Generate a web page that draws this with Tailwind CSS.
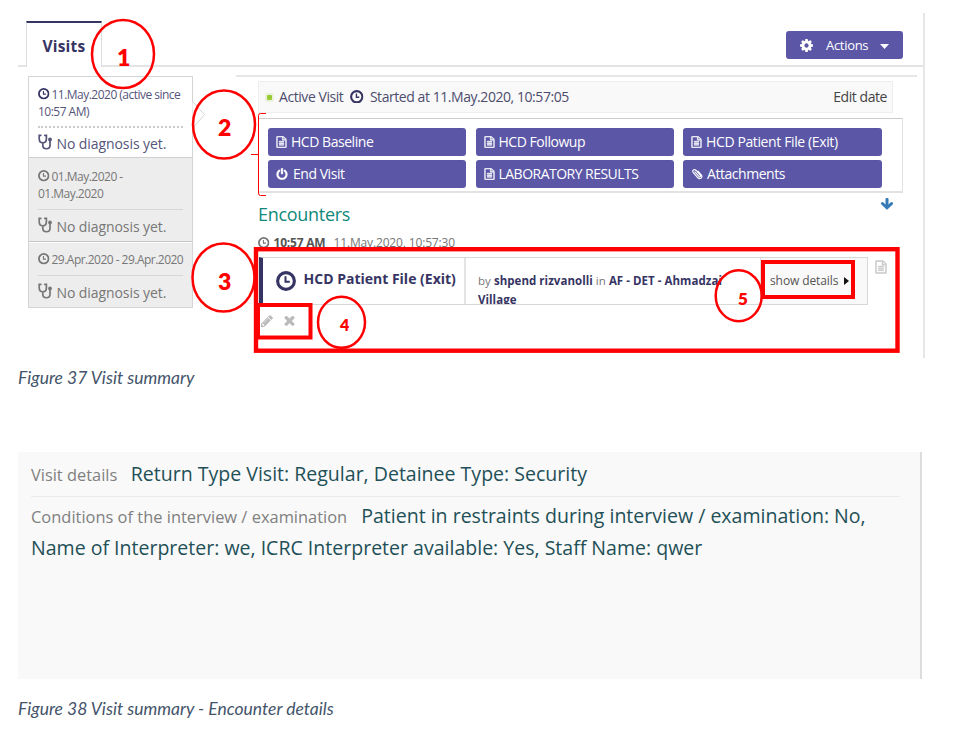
<!DOCTYPE html>
<html lang="en">
<head>
<meta charset="utf-8">
<title>Visit summary</title>
<script src="https://cdn.jsdelivr.net/npm/@tailwindcss/browser@4"></script>
</head>
<body class="bg-white">
<svg class="hidden">
  <symbol id="clock" viewBox="0 0 16 16"><circle cx="8" cy="8" r="6.700" fill="none" stroke="currentColor" stroke-width="2.500"/><path d="M7.600 4.200V8.600H11" fill="none" stroke="currentColor" stroke-width="1.600"/></symbol>
  <symbol id="file" viewBox="60 -40 1672 1872"><path fill="currentColor" stroke="currentColor" stroke-width="70" d="M1596 380q28 28 48 76t20 88v1152q0 40-28 68t-68 28h-1344q-40 0-68-28t-28-68v-1600q0-40 28-68t68-28h896q40 0 88 20t76 48zm-444-244v376h376q-10-29-22-41l-313-313q-12-12-41-22zm384 1528v-1024h-416q-40 0-68-28t-28-68v-416h-768v1536h1280zm-1024-864q0-14 9-23t23-9h704q14 0 23 9t9 23v64q0 14-9 23t-23 9h-704q-14 0-23-9t-9-23v-64zm736 224q14 0 23 9t9 23v64q0 14-9 23t-23 9h-704q-14 0-23-9t-9-23v-64q0-14 9-23t23-9h704zm0 256q14 0 23 9t9 23v64q0 14-9 23t-23 9h-704q-14 0-23-9t-9-23v-64q0-14 9-23t23-9h704z"/></symbol>
  <symbol id="power" viewBox="80 0 1632 1700"><path fill="currentColor" stroke="currentColor" stroke-width="50" d="M1664 896q0 156-61 298t-164 245-245 164-298 61-298-61-245-164-164-245-61-298q0-182 80.5-343t226.5-270q43-32 95.5-25t83.5 50q32 42 24.5 94.5t-49.5 84.5q-98 74-151.5 181t-53.5 228q0 104 40.5 198.5t109.5 163.5 163.5 109.5 198.5 40.5 198.5-40.5 163.5-109.5 109.5-163.5 40.5-198.5q0-121-53.5-228t-151.5-181q-42-32-49.5-84.5t24.5-94.5q31-43 84-50t95 25q146 109 226.5 270t80.5 343zm-640-768v640q0 52-38 90t-90 38-90-38-38-90v-640q0-52 38-90t90-38 90 38 38 90z"/></symbol>
  <symbol id="clip" viewBox="0 0 16 16"><path fill="none" stroke="currentColor" stroke-width="1.500" stroke-linecap="round" d="M5.200 5.200l5.300 6c1.400 1.400 3-.1 1.800-1.600L6.500 3C4.200.8.9 3.300 3.100 6.200l6 6.800c3.200 3.100 7.200-.6 4.500-3.900L9.300 4.200"/></symbol>
  <symbol id="pencil" viewBox="0 0 1792 1792"><path fill="currentColor" d="M491 1536l91-91-235-235-91 91v107h128v128h107zm523-928q0-22-22-22-10 0-17 7l-542 542q-7 7-7 17 0 22 22 22 10 0 17-7l542-542q7-7 7-17zm-54-192l416 416-832 832h-416v-416zm683 96q0 53-37 90l-166 166-416-416 166-165q36-38 90-38 53 0 91 38l235 234q37 39 37 91z"/></symbol>
  <symbol id="times" viewBox="256 384 1280 1280"><path fill="currentColor" d="M1490 1322q0 40-28 68l-136 136q-28 28-68 28t-68-28l-294-294-294 294q-28 28-68 28t-68-28l-136-136q-28-28-28-68t28-68l294-294-294-294q-28-28-28-68t28-68l136-136q28-28 68-28t68 28l294 294 294-294q28-28 68-28t68 28l136 136q28 28 28 68t-28 68l-294 294 294 294q28 28 28 68z"/></symbol>
  <symbol id="cog" viewBox="0 0 1792 1792"><path fill="currentColor" d="M1152 896q0-106-75-181t-181-75-181 75-75 181 75 181 181 75 181-75 75-181zm512-109v222q0 12-8 23t-20 13l-185 28q-19 54-39 91 35 50 107 138 10 12 10 25t-9 23q-27 37-99 108t-94 71q-12 0-26-9l-138-108q-44 23-91 38-16 136-29 186-7 28-36 28h-222q-14 0-24.5-8.5t-11.5-21.5l-28-184q-49-16-90-37l-141 107q-10 9-25 9-14 0-25-11-126-114-165-168-7-10-7-23 0-12 8-23 15-21 51-66.5t54-70.5q-27-50-41-99l-183-27q-13-2-21-12.5t-8-23.5v-222q0-12 8-23t19-13l186-28q14-46 39-92-40-57-107-138-10-12-10-24 0-10 9-23 26-36 98.5-107.5t94.5-71.5q13 0 26 10l138 107q44-23 91-38 16-136 29-186 7-28 36-28h222q14 0 24.5 8.5t11.5 21.5l28 184q49 16 90 37l142-107q9-9 24-9 13 0 25 10 129 119 165 170 7 8 7 22 0 12-8 23-15 21-51 66.5t-54 70.5q26 50 41 98l183 28q13 2 21 12.5t8 23.5z"/></symbol>
  <symbol id="down" viewBox="0 0 1792 1792"><path fill="currentColor" d="M1675 832q0 53-37 90l-651 652q-39 37-91 37-53 0-90-37l-651-652q-38-36-38-90 0-53 38-91l74-75q39-37 91-37 53 0 90 37l294 294v-704q0-52 38-90t90-38h128q52 0 90 38t38 90v704l294-294q37-37 90-37 52 0 91 37l75 75q37 39 37 91z"/></symbol>
  <symbol id="steth" viewBox="0 0 14 16"><path fill="none" stroke="currentColor" stroke-width="1.700" stroke-linecap="round" d="M2.800 1.400H1.200V4.500c0 5.800 7.200 5.800 7.200 0V1.400H6.800M4.800 9V11.500c0 4.300 7.200 4.300 7.200 0V7"/><circle cx="12" cy="5.500" r="1.900" fill="currentColor"/></symbol>
</svg>

<main class="relative w-[971px] h-[731px] overflow-hidden pl-[18px] pt-[13px] font-['Open_Sans',sans-serif] text-[#4d4d6e]">
  <!-- Visit dashboard -->
  <section class="w-[907px] h-[345px] border-r-2 border-[#e6e6e6]">
    <header class="flex items-end h-[54px]">
      <div class="w-2 h-0.5 bg-[#e4e4e4]"></div>
      <div class="w-[76px] h-[46px] border-t-2 border-t-[#363463] border-x border-x-[#dedede] pl-[15.500px] pt-[13px] text-[15.500px] leading-5 font-bold text-[#363463] tracking-[0.2px]">Visits</div>
      <div class="flex-1 h-[54px] border-b-2 border-[#e4e4e4] flex justify-end pt-[18px] pr-5">
        <button class="w-[117px] h-7 rounded-[3px] bg-[#5b57a6] text-white flex items-center pl-[13px] text-[13px]">
          <svg class="w-[15px] h-[15px]"><use href="#cog"/></svg>
          <span class="ml-[12px] pt-px tracking-[-0.3px]">Actions</span>
          <svg class="ml-[12px] mt-0.5 w-[9px] h-[5px]" viewBox="0 0 9 5"><path fill="currentColor" d="M0 0h9L4.500 5z"/></svg>
        </button>
      </div>
    </header>

    <div class="flex pt-2">
      <aside class="ml-[10px] mt-px w-[165px] h-[232px] border border-[#d4d4d4] text-[12px] text-[#777]">
        <div class="relative h-[81px] border-b border-[#cfcfcf] pl-[9px] pr-[9px] pt-[9px] text-[#55547a]">
          <p class="leading-[17px] whitespace-nowrap tracking-[-0.52px]"><svg class="inline w-[11.500px] h-[11.500px] mr-[2px] -mt-1 text-[#363463]"><use href="#clock"/></svg>11.May.2020 (active since<br>10:57 AM)</p>
          <div class="mt-[6px] border-t-2 border-dotted border-[#ccc]"></div>
          <p class="flex items-center h-[31px] text-[14px] tracking-[-0.08px]"><svg class="w-[14px] h-4 mr-[4.500px] -mt-[3px]"><use href="#steth"/></svg>No diagnosis yet.</p>
          <svg class="absolute left-[163px] top-[23px] w-[14px] h-[30px]" viewBox="0 0 14 30"><path d="M0 0v29L12.500 14.500 0 1" fill="#fff" stroke="#d4d4d4"/></svg>
        </div>
        <div class="h-[84px] border-b border-[#c4c4c4] bg-[#ededed] px-[9px] pt-[10px]">
          <p class="leading-[17px] whitespace-nowrap tracking-[-0.52px]"><svg class="inline w-[11.500px] h-[11.500px] mr-[2px] -mt-1"><use href="#clock"/></svg>01.May.2020 -<br>01.May.2020</p>
          <div class="mt-[7px] border-t border-[#d6d6d6]"></div>
          <p class="flex items-center h-8 text-[14px] tracking-[-0.08px]"><svg class="w-[14px] h-4 mr-[4.500px] -mt-[3px]"><use href="#steth"/></svg>No diagnosis yet.</p>
        </div>
        <div class="h-[65px] border-t border-white bg-[#ededed] px-[9px] pt-2">
          <p class="leading-[17px] whitespace-nowrap tracking-[-0.52px]"><svg class="inline w-[11.500px] h-[11.500px] mr-[2px] -mt-1"><use href="#clock"/></svg>29.Apr.2020 - 29.Apr.2020</p>
          <div class="mt-[7px] border-t border-[#d6d6d6]"></div>
          <p class="flex items-center h-8 text-[14px] tracking-[-0.08px]"><svg class="w-[14px] h-4 mr-[4.500px] -mt-[3px]"><use href="#steth"/></svg>No diagnosis yet.</p>
        </div>
      </aside>

      <div class="ml-[43px] w-[681px] border-t-2 border-[#e6e6e6] pl-[22px] pt-1">
        <div class="w-[635px] h-8 border border-[#eee] bg-[#f9f9f9] flex items-center pl-2 pr-[5px] pb-px text-[14px] tracking-[-0.44px]">
          <i class="w-[5px] h-[5px] mt-0.5 rounded-[1px] bg-[#9c3] ring-2 ring-[#9c3]/15"></i>
          <span class="ml-[7px]">Active Visit</span>
          <svg class="w-[13.500px] h-[13.500px] ml-[7px] mr-[6px] text-[#363463]"><use href="#clock"/></svg>
          <span>Started at 11.May.2020, 10:57:05</span>
          <span class="ml-auto text-[#444]">Edit date</span>
        </div>
        <div class="mt-[5px] w-[645px] h-[75px] border border-t-[#ccc] border-[#e2e2e2] border-b-2 grid grid-cols-[198px_198px_199px] auto-rows-[28px] gap-x-[9.500px] gap-y-1 pl-[9px] pt-[9px] text-[14px] text-white tracking-[-0.46px]">
          <button class="rounded-[3px] bg-[#5b57a6] flex items-center pl-2 pb-px"><svg class="w-[11px] h-3 mr-1"><use href="#file"/></svg>HCD Baseline</button>
          <button class="rounded-[3px] bg-[#5b57a6] flex items-center pl-2 pb-px"><svg class="w-[11px] h-3 mr-1"><use href="#file"/></svg>HCD Followup</button>
          <button class="rounded-[3px] bg-[#5b57a6] flex items-center pl-2 pb-px tracking-[-0.38px]"><svg class="w-[11px] h-3 mr-1"><use href="#file"/></svg>HCD Patient File (Exit)</button>
          <button class="rounded-[3px] bg-[#5b57a6] flex items-center pl-2 pb-px"><svg class="w-3 h-3 mr-[5px]"><use href="#power"/></svg>End Visit</button>
          <button class="rounded-[3px] bg-[#5b57a6] flex items-center pl-2 pb-px tracking-[-0.52px]"><svg class="w-[11px] h-3 mr-1"><use href="#file"/></svg>LABORATORY RESULTS</button>
          <button class="rounded-[3px] bg-[#5b57a6] flex items-center pl-2 pb-px"><svg class="w-3 h-3 mr-1"><use href="#clip"/></svg>Attachments</button>
        </div>
        <div class="flex justify-between w-[645px] h-[41px] pr-[9px]">
          <h2 class="pt-2 text-[18px] leading-[26px] tracking-[-0.3px] text-[#12897b]">Encounters</h2>
          <svg class="w-[14px] h-[14px] mt-1 text-[#337ab7]"><use href="#down"/></svg>
        </div>
        <p class="flex items-center h-[17px] text-[12px] text-[#777]"><svg class="w-[11.500px] h-[11.500px] mr-1"><use href="#clock"/></svg><b class="text-[#555] tracking-[-0.2px]">10:57 AM</b><span class="ml-2 tracking-[-0.15px]">11.May.2020, 10:57:30</span></p>
        <div class="flex mt-[6px]">
          <div class="ml-px w-[609px] h-12 border border-[#d8d8d8] border-l-4 border-l-[#363463] flex overflow-hidden">
            <div class="w-[203px] border-r-2 border-[#e4e4e4] flex items-center pl-[13px] pb-[4px] text-[14px] font-bold text-[#363463]"><svg class="w-5 h-5 mr-[7.500px] mt-1"><use href="#clock"/></svg><span class="whitespace-nowrap -mt-0.5">HCD Patient File (Exit)</span></div>
            <div class="w-[295px] border-r border-[#ddd] pl-3 pt-[13px] text-[11.500px] leading-[19px] tracking-[0.04px] text-[#777] whitespace-nowrap">by <b class="text-[#363463]">shpend rizvanolli</b> in <b class="text-[#363463]">AF - DET - Ahmadzai<br>Village</b></div>
            <div class="flex-1 bg-[#f9f9f9] flex items-center pl-[9px] text-[12px] tracking-[-0.1px] text-[#555] whitespace-nowrap">show details<svg class="ml-[6px] w-[5px] h-2" viewBox="0 0 5 8"><path fill="#111" d="M0 0l5 4-5 4z"/></svg></div>
          </div>
          <svg class="ml-[7px] mt-[3px] w-3 h-[14px] text-[#c8c8c8]"><use href="#file"/></svg>
        </div>
        <div class="flex items-center gap-[10px] h-8 pl-[2px] text-[#bbb]">
          <svg class="w-[14px] h-[14px]"><use href="#pencil"/></svg>
          <svg class="w-[11px] h-[11px]"><use href="#times"/></svg>
        </div>
      </div>
    </div>
  </section>
  <p class="h-[94px] pt-[10px] font-['Lato',sans-serif] italic text-[17.500px] leading-5 text-[#44546a]">Figure 37 Visit summary</p>

  <!-- Encounter details -->
  <section class="w-[904px] h-[227px] border-r-2 border-[#ddd] bg-[#f9f9f9] pl-[13px] pr-5 text-[19.550px] leading-[31px] text-[#1f5057]">
    <p class="h-[45px] pt-[6px] border-b border-[#ececec]"><span class="mr-[13.500px] text-[16.400px] text-[#808080]">Visit details</span>Return Type Visit: Regular, Detainee Type: Security</p>
    <p class="pt-[4px] leading-[30.500px] whitespace-nowrap"><span class="mr-[14px] text-[16.450px] text-[#808080]">Conditions of the interview / examination</span>Patient in restraints during interview / examination: No,<br>Name of Interpreter: we, ICRC Interpreter available: Yes, Staff Name: qwer</p>
  </section>
  <p class="pt-5 font-['Lato',sans-serif] italic text-[17.500px] leading-5 text-[#44546a]">Figure 38 Visit summary - Encounter details</p>

  <!-- Numbered callouts over the dashboard -->
  <svg class="absolute left-0 top-0 w-[971px] h-[400px]" viewBox="0 0 971 400" fill="none" stroke="#f00" stroke-width="2.500">
    <ellipse cx="123" cy="54" rx="31" ry="34"/>
    <ellipse cx="224" cy="124.500" rx="31" ry="34"/>
    <ellipse cx="223.500" cy="277.500" rx="31" ry="34"/>
    <ellipse cx="341.500" cy="322.300" rx="23.500" ry="25.500"/>
    <ellipse cx="738.700" cy="295.700" rx="23" ry="25.500"/>
    <path stroke-width="1" d="M266 113.500h-5.500q-2 0-2 2V193q0 2.500 2 2.500h5.500M251 154.500h7.500"/>
    <rect x="256" y="249.200" width="641.500" height="101.500" stroke-width="4.400"/>
    <rect x="258" y="305" width="52.500" height="32.500" stroke-width="4"/>
    <rect x="763" y="262" width="90" height="35" stroke-width="4"/>
  </svg>
  <b class="absolute left-[117px] top-[45px] font-['Lato',sans-serif] font-extrabold text-[23px] leading-6 text-[#f00]">1</b>
  <b class="absolute left-[218px] top-[115px] font-['Lato',sans-serif] font-extrabold text-[23px] leading-6 text-[#f00]">2</b>
  <b class="absolute left-[218px] top-[269px] font-['Lato',sans-serif] font-extrabold text-[23px] leading-6 text-[#f00]">3</b>
  <b class="absolute left-[340px] top-[317px] font-['Lato',sans-serif] font-extrabold text-[16px] leading-4 text-[#f00]">4</b>
  <b class="absolute left-[738px] top-[291px] h-[14px] overflow-hidden font-['Lato',sans-serif] font-extrabold text-[17px] leading-4 text-[#f00]">5</b>
</main>
</body>
</html>
